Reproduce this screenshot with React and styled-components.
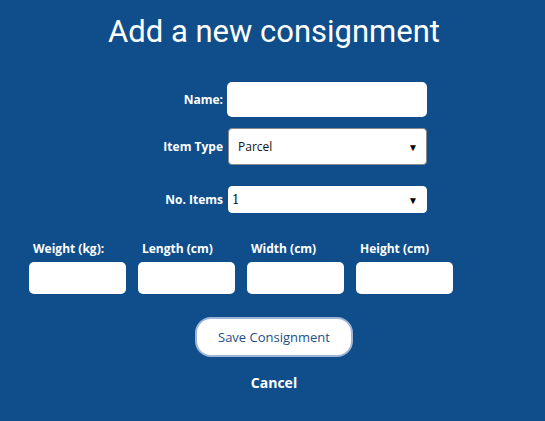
import React from 'react'
import styled, { createGlobalStyle } from 'styled-components'

const GlobalStyle = createGlobalStyle`
  html, body {
    margin: 0;
    padding: 0;
    background: #104e8b;
  }
  body {
    font-family: "Open Sans", "Liberation Sans", sans-serif;
  }
`

const Page = styled.div`
  width: 545px;
  height: 421px;
  background: #104e8b;
  color: white;
  overflow: hidden;
`

const Title = styled.h1`
  margin: 0;
  padding-top: 13px;
  font-family: Roboto, "Liberation Sans", sans-serif;
  font-weight: 400;
  font-size: 31px;
  line-height: 38px;
  text-align: center;
  padding-left: 3px;
`

const Form = styled.div`
  display: grid;
  grid-template-columns: 223px 200px;
  column-gap: 4px;
  align-items: center;
  margin-top: 31px;
`

const Label = styled.label`
  font-size: 12px;
  font-weight: 700;
  text-align: right;
  margin-top: ${p => p.$top || 0}px;
`

const TextInput = styled.input`
  box-sizing: border-box;
  width: 200px;
  height: 35px;
  border: none;
  border-radius: 5px;
  background: white;
  outline: none;
`

const SelectWrap = styled.div`
  position: relative;
  margin-top: ${p => p.$top || 0}px;
  margin-left: 1px;
`

const Select = styled.select`
  box-sizing: border-box;
  appearance: none;
  width: 199px;
  height: ${p => p.$h}px;
  border: 1px solid ${p => p.$border};
  border-radius: 4px;
  background: white;
  color: #111;
  font-family: ${p => p.$serif ? '"DejaVu Serif", serif' : '"Open Sans", "Liberation Sans", sans-serif'};
  font-size: 12px;
  padding-left: ${p => p.$pad}px;
  outline: none;
`

const Arrow = styled.span`
  position: absolute;
  right: 9px;
  top: 50%;
  transform: translateY(-50%);
  font-size: 10px;
  color: #000;
  pointer-events: none;
`

const Dims = styled.div`
  display: grid;
  grid-template-columns: repeat(4, 97px);
  column-gap: 12px;
  margin: 28px 0 0 29px;
`

const Dim = styled.div`
  display: flex;
  flex-direction: column;
`

const DimLabel = styled.span`
  font-size: 12px;
  font-weight: 700;
  padding-left: 4px;
  line-height: 16px;
  margin-bottom: 5px;
`

const DimInput = styled.input`
  box-sizing: border-box;
  width: 97px;
  height: 32px;
  border: none;
  border-radius: 5px;
  background: white;
  outline: none;
`

const Actions = styled.div`
  display: flex;
  flex-direction: column;
  align-items: center;
  margin-top: 23px;
  padding-left: 3px;
`

const SaveButton = styled.button`
  box-sizing: border-box;
  width: 158px;
  height: 40px;
  border: 2px solid #9fb5d6;
  border-radius: 16px;
  background: white;
  color: #1d4f82;
  font-family: "Open Sans", "Liberation Sans", sans-serif;
  font-size: 13px;
`

const Cancel = styled.div`
  margin-top: 16px;
  font-size: 14px;
  font-weight: 700;
`

const DIMS = ['Weight (kg):', 'Length (cm)', 'Width (cm)', 'Height (cm)']

export default function App() {
  return (
    <Page>
      <GlobalStyle />
      <Title>Add a new consignment</Title>
      <Form>
        <Label>Name:</Label>
        <TextInput />
        <Label $top={11}>Item Type</Label>
        <SelectWrap $top={11}>
          <Select $h={37} $border="#8a8a8a" $pad={9} defaultValue="Parcel">
            <option>Parcel</option>
          </Select>
          <Arrow>▼</Arrow>
        </SelectWrap>
        <Label $top={21}>No. Items</Label>
        <SelectWrap $top={21}>
          <Select $h={27} $border="#ffffff" $pad={3} $serif defaultValue="1">
            <option>1</option>
          </Select>
          <Arrow>▼</Arrow>
        </SelectWrap>
      </Form>
      <Dims>
        {DIMS.map(d => (
          <Dim key={d}>
            <DimLabel>{d}</DimLabel>
            <DimInput />
          </Dim>
        ))}
      </Dims>
      <Actions>
        <SaveButton>Save Consignment</SaveButton>
        <Cancel>Cancel</Cancel>
      </Actions>
    </Page>
  )
}
